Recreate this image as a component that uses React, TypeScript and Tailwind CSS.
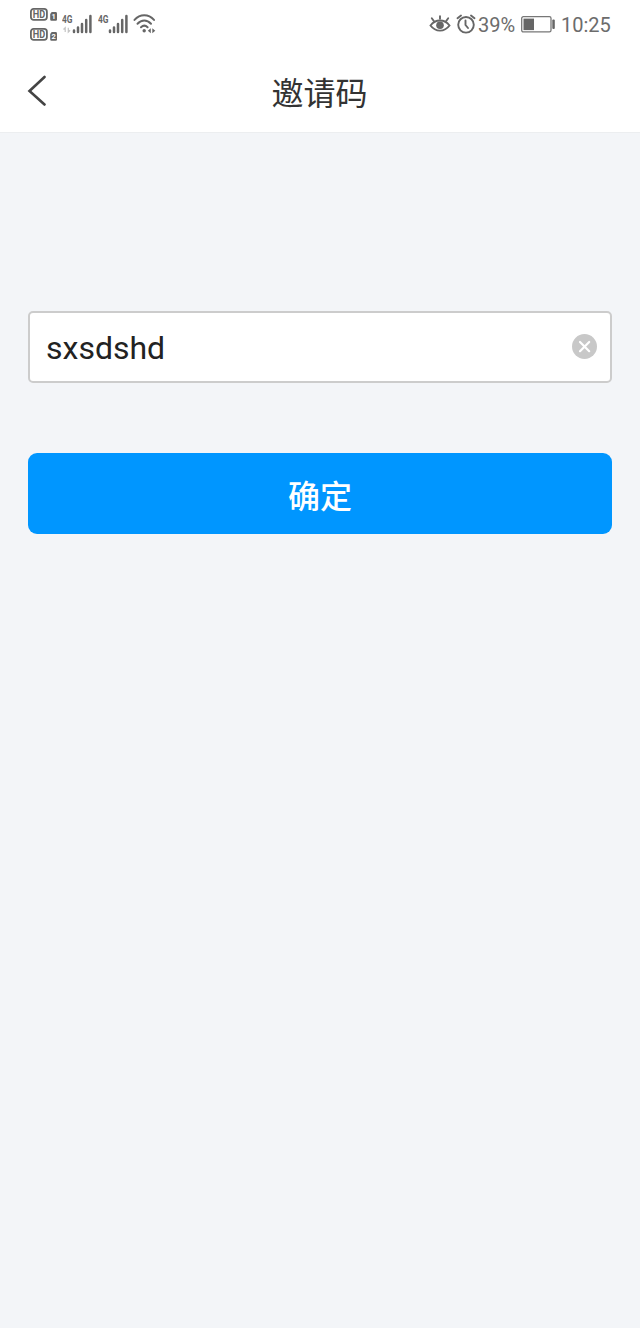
import React, { useState } from 'react';

function HdBadge({ sim }: { sim: string }) {
  return (
    <svg width="27" height="13" viewBox="0 0 27 13">
      <rect x="0.9" y="0.9" width="16" height="11" rx="2.8" fill="none" stroke="#666" strokeWidth="1.8" />
      <text x="2.8" y="10" fontSize="10" fontWeight="700" fill="#666" textLength="12.4" lengthAdjust="spacingAndGlyphs">HD</text>
      <path d="M21.7 4H25.6a1.4 1.4 0 0 1 1.4 1.4v6.2a1.2 1.2 0 0 1-1.2 1.2h-4.4a1.2 1.2 0 0 1-1.2-1.2V6z" fill="#666" />
      <text x="21.6" y="11.3" fontSize="7.5" fontWeight="700" fill="#fff">{sim}</text>
    </svg>
  );
}

function Signal({ arrows = false }: { arrows?: boolean }) {
  return (
    <svg width="31" height="22" viewBox="0 0 31 22">
      <text x="0" y="9.8" fontSize="11.5" fontWeight="700" fill="#666" textLength="10.5" lengthAdjust="spacingAndGlyphs">4G</text>
      {arrows && (
        <path d="M3.2 19v-4.2L1.5 16.5M6.3 14.8V19l1.8-1.7" fill="none" stroke="#c4c4c4" strokeWidth="1.2" />
      )}
      <path d="M12 17.5v1.5M16 14.5v4.5M20 11v8M24.2 7v12M28.4 3v16" stroke="#666" strokeWidth="2.5" strokeLinecap="round" />
    </svg>
  );
}

function Wifi() {
  return (
    <svg width="23" height="20" viewBox="0 0 23 20" fill="none" stroke="#666" strokeLinecap="round">
      <path d="M1.5 5.9C7-.2 15.500-.2 21 5.900M4.500 9.800c4-4.300 9.500-4.300 13.500 0M8 13.200c2-1.900 4.700-1.900 6.600 0" strokeWidth="2" />
      <circle cx="11.2" cy="16.8" r="1.7" fill="#666" stroke="none" />
      <path d="M17.8 14.3v5l-3-2.5zM19.3 14.3v5l3-2.5z" fill="#666" stroke="none" />
    </svg>
  );
}

function Eye() {
  return (
    <svg width="22" height="20" viewBox="0 0 22 20" fill="none" stroke="#666" strokeWidth="1.9" strokeLinecap="round">
      <path d="M1.5 11.5C6.5 4.900 15.500 4.900 20.500 11.500C15.500 18.300 6.500 18.300 1.500 11.500z" />
      <circle cx="11" cy="11.3" r="3.8" fill="#666" stroke="none" />
      <path d="M11 2.300v2.500M2.800 4.200l2 2.800M19.200 4.200l-2 2.800" />
    </svg>
  );
}

function Alarm() {
  return (
    <svg width="20" height="20" viewBox="0 0 20 20" fill="none" stroke="#666" strokeWidth="1.9" strokeLinecap="round">
      <circle cx="10" cy="10.800" r="7.800" />
      <path d="M9.500 6.500V11l2.500 3M1.500 4.200l3.500-2.700M18.500 4.200L15 1.500" />
    </svg>
  );
}

function Battery() {
  return (
    <svg width="34" height="17" viewBox="0 0 34 17">
      <rect x=".7" y=".7" width="29.3" height="15.2" rx="1.6" fill="none" stroke="#777" strokeWidth="1.3" />
      <rect x="2.5" y="2.6" width="10.5" height="11.5" fill="#666" />
      <rect x="31.3" y="3.5" width="2.5" height="9.5" rx="1" fill="#666" />
    </svg>
  );
}

export default function App() {
  const [code, setCode] = useState('sxsdshd');

  return (
    <div className="flex min-h-[1328px] w-[640px] flex-col bg-[#f3f5f8] font-[Roboto,'Noto_Sans_CJK_SC',sans-serif]">
      <header className="flex h-[133px] flex-col border-b border-[#eceef0] bg-white">
        <div className="flex h-12 items-center justify-between pr-[29px] pl-[29.5px] text-[#6c6c6c]">
          <div className="flex items-center font-['Roboto',sans-serif]">
            <div className="flex flex-col gap-[7px]">
              <HdBadge sim="1" />
              <HdBadge sim="2" />
            </div>
            <div className="ml-[5px] flex items-center gap-[5px]">
              <Signal arrows />
              <Signal />
            </div>
            <div className="ml-[4px]">
              <Wifi />
            </div>
          </div>
          <div className="flex items-center">
            <Eye />
            <div className="ml-[5px]">
              <Alarm />
            </div>
            <span className="ml-[2px] w-[38px] pt-px text-[20px] leading-6 whitespace-nowrap">39%</span>
            <div className="ml-[5px]">
              <Battery />
            </div>
            <span className="ml-[6px] w-[50px] pt-px text-[20px] leading-6 whitespace-nowrap">10:25</span>
          </div>
        </div>
        <div className="grid h-[84px] grid-cols-[80px_1fr_80px] items-center">
          <button aria-label="返回" className="pl-[27px]">
            <svg width="20" height="32" viewBox="0 0 20 32" fill="none" stroke="#444" strokeWidth="2.6" strokeLinecap="round">
              <path d="M17.500 3L2.500 17L17.500 30.500" />
            </svg>
          </button>
          <h1 className="pt-[8px] pr-px text-center text-[32px] leading-10 text-[#333]">邀请码</h1>
        </div>
      </header>
      <main className="flex flex-col px-7 pt-[178px]">
        <div className="flex h-[72px] items-center rounded-[5px] border-2 border-[#ccc] bg-white pr-[13px] pl-4">
          <input
            value={code}
            onChange={(e) => setCode(e.target.value)}
            className="min-w-0 flex-1 pt-px text-[32px] leading-10 text-[#222] outline-none"
          />
          <button aria-label="清除" onClick={() => setCode('')}>
            <svg className="mb-px" width="25" height="25" viewBox="0 0 25 25">
              <circle cx="12.5" cy="12.5" r="12.5" fill="#c8c8c8" />
              <path d="M8 8l9.2 9.2M17.2 8L8 17.2" stroke="#fff" strokeWidth="2.2" strokeLinecap="round" />
            </svg>
          </button>
        </div>
        <button className="mt-[70px] h-[81px] rounded-[9px] bg-[#0096ff] pt-[7px] text-[32px] font-medium text-white">确定</button>
      </main>
    </div>
  );
}
